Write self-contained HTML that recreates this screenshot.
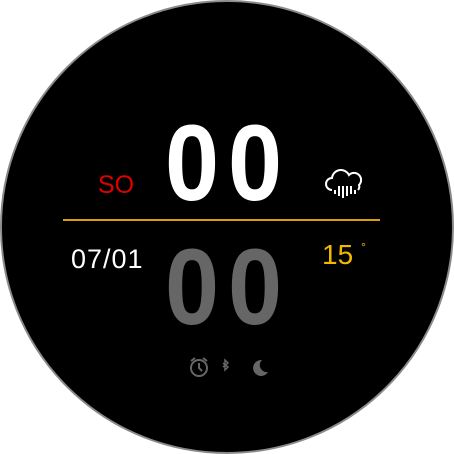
<!DOCTYPE html>
<html><head><style>
html,body{margin:0;padding:0;background:#fff;width:454px;height:454px;overflow:hidden}
.c{position:absolute;left:0;top:0;width:450px;height:450px;border-radius:50%;background:#000;border:2px solid #8a8a8a}
.t{position:absolute;font-family:"Liberation Sans",sans-serif;line-height:1;white-space:nowrap}
.z{font-weight:bold;font-size:108px;transform:scaleX(0.9);transform-origin:left top}
</style></head><body>
<div class="c"></div>
<div class="t z" style="left:165px;top:109px;color:#fff">0</div>
<div class="t z" style="left:228px;top:109px;color:#fff">0</div>
<div class="t z" style="left:165px;top:233px;color:#666">0</div>
<div class="t z" style="left:228px;top:233px;color:#666">0</div>
<div class="t" style="left:98px;top:173px;font-size:25px;color:#e00000">SO</div>
<div class="t" style="left:71px;top:246px;font-size:27px;letter-spacing:1px;color:#fff">07/01</div>
<div class="t" style="left:322px;top:241px;font-size:28px;color:#f5b800">15<span style="font-size:12px;vertical-align:top;margin-left:8px">°</span></div>
<div style="position:absolute;left:63px;top:219px;width:317px;height:2px;background:#d9a000"></div>
<svg style="position:absolute;left:322px;top:166px" width="46" height="36" viewBox="0 0 46 36" fill="none" stroke="#fff" stroke-width="2">
<path d="M10 24 a6 6 0 0 1 0-12 a9 9 0 0 1 17-3 a7 7 0 0 1 10 10 a5 5 0 0 1-1 5"/>
<path d="M17 20v10M21 20v12M25 20v10M29 20v8M13 24v4M33 24v4"/>
</svg>
<svg style="position:absolute;left:188px;top:356px" width="90" height="22" viewBox="0 0 90 22" fill="none" stroke="#666" stroke-width="2">
<circle cx="11" cy="12" r="8"/><path d="M11 7v5l3 3M3 5l4-3M19 5l-4-3"/>
<path d="M35 7l5 4-3 3V4l3 3-5 4" stroke-width="1.5"/>
<path d="M74 4a8 8 0 1 0 6 12a7 7 0 0 1-6-12z" fill="#666" stroke="none"/>
</svg>
</body></html>
